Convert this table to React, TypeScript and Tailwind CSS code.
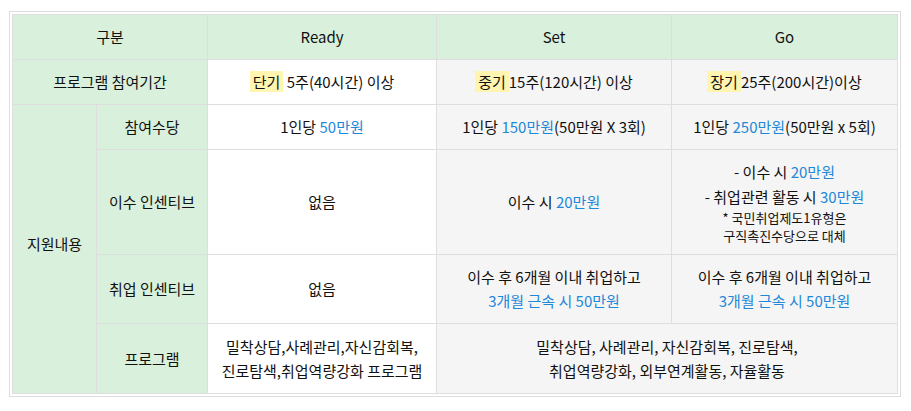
import React from "react";

const th = "border border-[#dedede] bg-[#d9f0dc] text-center align-middle font-normal";
const td = "border border-[#dedede] text-center align-middle";
const Blue = ({ children }: { children: React.ReactNode }) => (
  <span className="text-[#1e88d9]">{children}</span>
);
const Mark = ({ children }: { children: React.ReactNode }) => (
  <span className="bg-[#fff4b0] px-[3px]">{children}</span>
);

export default function App() {
  return (
    <div
      className="min-h-screen bg-white pt-[11px] pl-[9px] text-[15px] text-[#111]"
      style={{ fontFamily: '"Noto Sans CJK KR", "Noto Sans", sans-serif' }}
    >
      <div className="w-[892px] border border-[#dddddd] p-[2px]">
        <table className="w-full table-fixed border-collapse leading-[24px]">
          <colgroup>
            <col className="w-[84px]" />
            <col className="w-[111px]" />
            <col className="w-[229px]" />
            <col className="w-[235px]" />
            <col />
          </colgroup>
          <tbody>
            <tr className="h-[45px]">
              <th colSpan={2} className={th}>구분</th>
              <th className={th}>Ready</th>
              <th className={th}>Set</th>
              <th className={th}>Go</th>
            </tr>
            <tr className="h-[45px]">
              <th colSpan={2} className={th}>프로그램 참여기간</th>
              <td className={`${td} bg-white`}>
                <Mark>단기</Mark> 5주(40시간) 이상
              </td>
              <td className={`${td} bg-[#f5f5f5]`}>
                <Mark>중기</Mark>15주(120시간) 이상
              </td>
              <td className={`${td} bg-[#f5f5f5]`}>
                <Mark>장기</Mark>25주(200시간)이상
              </td>
            </tr>
            <tr className="h-[45px]">
              <th rowSpan={4} className={`${th} pb-[10px]`}>지원내용</th>
              <th className={th}>참여수당</th>
              <td className={`${td} bg-white`}>
                1인당 <Blue>50만원</Blue>
              </td>
              <td className={`${td} bg-[#f5f5f5]`}>
                1인당 <Blue>150만원</Blue>(50만원 X 3회)
              </td>
              <td className={`${td} bg-[#f5f5f5]`}>
                1인당 <Blue>250만원</Blue>(50만원 x 5회)
              </td>
            </tr>
            <tr className="h-[105px]">
              <th className={th}>이수 인센티브</th>
              <td className={`${td} bg-white`}>없음</td>
              <td className={`${td} bg-[#f5f5f5]`}>
                이수 시 <Blue>20만원</Blue>
              </td>
              <td className={`${td} bg-[#f5f5f5]`}>
                <div className="leading-[25px]">
                  - 이수 시 <Blue>20만원</Blue>
                </div>
                <div className="leading-[25px]">
                  - 취업관련 활동 시 <Blue>30만원</Blue>
                </div>
                <div className="text-[13px] leading-[18px]">
                  * 국민취업제도1유형은
                  <br />
                  구직촉진수당으로 대체
                </div>
              </td>
            </tr>
            <tr className="h-[69px]">
              <th className={th}>취업 인센티브</th>
              <td className={`${td} bg-white`}>없음</td>
              <td className={`${td} bg-[#f5f5f5]`}>
                이수 후 6개월 이내 취업하고
                <br />
                <Blue>3개월 근속 시 50만원</Blue>
              </td>
              <td className={`${td} bg-[#f5f5f5]`}>
                이수 후 6개월 이내 취업하고
                <br />
                <Blue>3개월 근속 시 50만원</Blue>
              </td>
            </tr>
            <tr className="h-[70px]">
              <th className={th}>프로그램</th>
              <td className={`${td} bg-white`}>
                밀착상담,사례관리,자신감회복,
                <br />
                진로탐색,취업역량강화 프로그램
              </td>
              <td colSpan={2} className={`${td} bg-[#f5f5f5]`}>
                밀착상담, 사례관리, 자신감회복, 진로탐색,
                <br />
                취업역량강화, 외부연계활동, 자율활동
              </td>
            </tr>
          </tbody>
        </table>
      </div>
    </div>
  );
}
